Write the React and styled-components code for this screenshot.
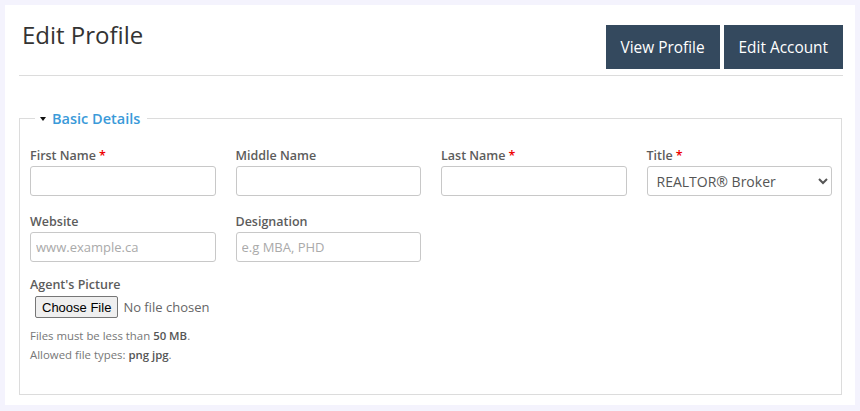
import styled, { createGlobalStyle } from "styled-components";

const GlobalStyle = createGlobalStyle`
  html, body {
    margin: 0;
    padding: 0;
    background: #f4f3fd;
    font-family: "Open Sans", "Liberation Sans", sans-serif;
    color: #333;
  }
  * {
    box-sizing: border-box;
  }
`;

const Page = styled.div`
  padding: 5px;
  width: 860px;
`;

const Panel = styled.div`
  background: #fff;
  width: 850px;
  height: 400px;
  padding: 0 12px 0 14px;
`;

const Header = styled.div`
  display: flex;
  justify-content: space-between;
  align-items: flex-start;
  padding-top: 20px;
  padding-bottom: 6px;
  border-bottom: 1px solid #dcdcdc;
`;

const Title = styled.h1`
  margin: 0;
  padding: 0 0 0 3px;
  font-size: 24px;
  font-weight: 400;
  line-height: 20px;
  color: #333;
`;

const Actions = styled.div`
  display: flex;
  gap: 4px;
`;

const ActionButton = styled.button`
  height: 44px;
  padding: 0 15px;
  border: none;
  background: #34495e;
  color: #fff;
  font-family: "Open Sans", sans-serif;
  font-size: 15.4px;
  cursor: pointer;
`;

const Fieldset = styled.fieldset`
  margin: 33px 1px 0 0;
  padding: 20px 9px 16px 10px;
  border: 1px solid #dcdcdc;
  height: 286px;
  min-width: 0;
`;

const Legend = styled.legend`
  margin-left: 5px;
  padding: 0 7px 0 5px;
  display: flex;
  align-items: center;
  gap: 6px;
  color: #3a9ad9;
  font-size: 14.5px;
  font-weight: 600;
`;

const Caret = styled.span`
  width: 0;
  height: 0;
  border-left: 3.5px solid transparent;
  border-right: 3.5px solid transparent;
  border-top: 4px solid #111;
`;

const Grid = styled.div`
  display: grid;
  grid-template-columns: repeat(4, 1fr);
  column-gap: 20px;
  row-gap: 18px;
`;

const Field = styled.div`
  display: flex;
  flex-direction: column;
  gap: 2px;
`;

const Label = styled.label`
  font-size: 12.5px;
  font-weight: 600;
  color: #5c5c5c;
  line-height: 16px;
`;

const Required = styled.span`
  color: #e00;
  margin-left: 3px;
`;

const Input = styled.input`
  height: 30px;
  width: 100%;
  border: 1px solid #c8c8c8;
  border-radius: 3px;
  padding: 0 5px;
  font-family: "Open Sans", sans-serif;
  font-size: 13px;
  color: #555;
  &::placeholder {
    color: #aaa;
  }
`;

const Select = styled.select`
  height: 30px;
  width: 100%;
  border: 1px solid #c8c8c8;
  border-radius: 3px;
  padding: 0 6px 0 5px;
  background: #fff;
  font-family: "Open Sans", sans-serif;
  font-size: 14px;
  color: #555;
`;

const FileBlock = styled.div`
  margin-top: 15px;
  display: flex;
  flex-direction: column;
`;

const FileInput = styled.input`
  margin: 3px 0 8px 5px;
  font-family: "Open Sans", sans-serif;
  font-size: 13px;
  color: #666;
  &::file-selector-button {
    font-family: "Liberation Sans", Arial, sans-serif;
    font-size: 13px;
    color: #000;
    padding: 3px 6px 2px;
    margin-right: 5px;
    border: 1px solid #767676;
    border-radius: 2px;
    background: #efefef;
  }
`;

const Help = styled.div`
  font-size: 11.4px;
  color: #777;
  line-height: 19px;
  b {
    color: #555;
    font-weight: 600;
  }
`;

const fields = [
  { label: "First Name", required: true },
  { label: "Middle Name" },
  { label: "Last Name", required: true },
  { label: "Title", required: true, select: true },
  { label: "Website", placeholder: "www.example.ca" },
  { label: "Designation", placeholder: "e.g MBA, PHD" },
];

export default function App() {
  return (
    <>
      <GlobalStyle />
      <Page>
        <Panel>
          <Header>
            <Title>Edit Profile</Title>
            <Actions>
              <ActionButton>View Profile</ActionButton>
              <ActionButton>Edit Account</ActionButton>
            </Actions>
          </Header>
          <Fieldset>
            <Legend>
              <Caret />
              Basic Details
            </Legend>
            <Grid>
              {fields.map((f) => (
                <Field key={f.label}>
                  <Label>
                    {f.label}
                    {f.required && <Required>*</Required>}
                  </Label>
                  {f.select ? (
                    <Select defaultValue="broker">
                      <option value="broker">REALTOR® Broker</option>
                    </Select>
                  ) : (
                    <Input placeholder={f.placeholder} />
                  )}
                </Field>
              ))}
            </Grid>
            <FileBlock>
              <Label>Agent's Picture</Label>
              <FileInput type="file" />
              <Help>
                Files must be less than <b>50 MB</b>.
              </Help>
              <Help>
                Allowed file types: <b>png jpg</b>.
              </Help>
            </FileBlock>
          </Fieldset>
        </Panel>
      </Page>
    </>
  );
}
